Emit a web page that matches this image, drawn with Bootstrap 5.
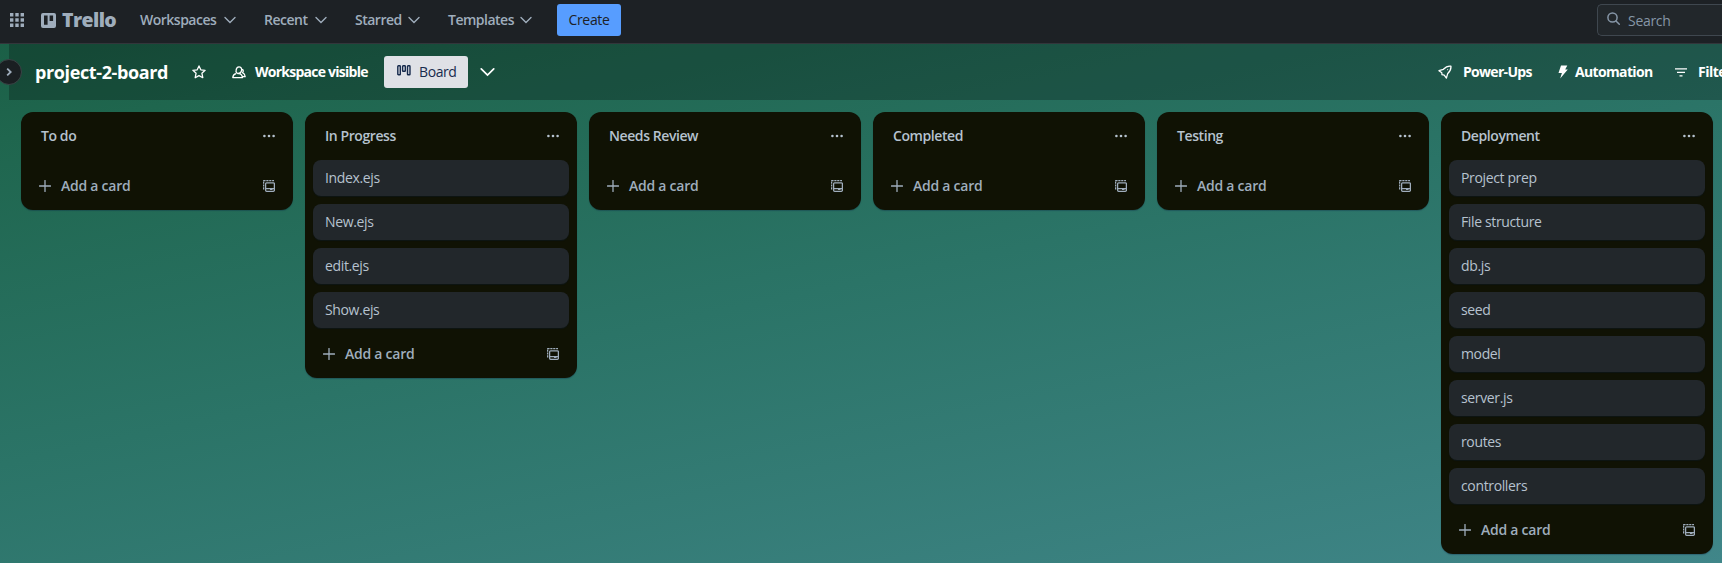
<!DOCTYPE html>
<html lang="en" data-bs-theme="dark">
<head>
<meta charset="utf-8">
<title>project-2-board | Trello</title>
<link href="https://cdn.jsdelivr.net/npm/bootstrap@5.3.0/dist/css/bootstrap.min.css" rel="stylesheet">
<style>
html,body{height:100%}
body{font-family:"Open Sans","Noto Sans",sans-serif;font-size:14px;line-height:20px;color:#b6c2cf;overflow:hidden;white-space:nowrap;background:linear-gradient(168deg,#195c43 0%,#1f664e 15%,#2b7467 50%,#408689 100%)}
svg{display:block;flex:none}
.topbar{height:44px;background:#1d2125;border-bottom:1px solid #32363b;color:#9fadbc;padding:0 0 3px 10px;overflow:hidden}
.wordmark{width:84px;gap:6px;margin-left:17px}
.word{font-size:19.5px;font-weight:800;line-height:20px;letter-spacing:-.6px}
.menu{font-weight:600;letter-spacing:-.5px;margin-right:28px}
.m-workspaces{width:96px;margin-left:-1px}
.m-recent{width:63px}
.m-starred{width:65px}
.m-templates{width:84px;margin-right:25px}
.create{width:64px;height:32px;background:#579dff;color:#1d2125;border-radius:3px;letter-spacing:-.3px}
.search{width:125px;height:32px;border:1px solid #3f474f;border-right:0;border-radius:5px 0 0 5px;background:#22272b;color:#8696a7;padding:1px 0 0 9px;gap:8px;letter-spacing:-.3px}
.boardbar{height:56px;margin-left:9px;background:rgba(0,0,0,.24);color:#fff;position:relative;padding-left:26px}
.toggle{position:absolute;left:-13px;top:15px;width:26px;height:26px;border-radius:50%;background:#1a1f22;border:1px solid #3a4446;color:#9fadbc}
.title{font-size:18px;font-weight:700;letter-spacing:-.38px;width:157px}
.people{margin-left:26px}
.strong{font-weight:700;letter-spacing:-.5px}
.visibility{margin-left:9px;width:129px;letter-spacing:-.75px}
.view{width:84px;height:32px;background:#dfe1e6;color:#172b4d;border-radius:3px;padding-left:13px;gap:8px;letter-spacing:-.4px}
.tools{width:284px}
.tools span{flex:none}
.t-power{margin-left:11px;width:95px;letter-spacing:-.7px}
.t-auto{margin-left:7px;width:100px;letter-spacing:-.9px}
.t-auto{letter-spacing:-.65px}
.t-filter{margin-left:11px}
.lists{padding:12px 0 0 21px;gap:12px}
.lane{width:272px;background:#101204;border-radius:12px;box-shadow:0 1px 1px rgba(9,30,66,.3)}
.lanehead{height:48px;padding:0 18px 0 20px;font-weight:600;letter-spacing:-.42px}
.stack{padding:0 8px;gap:8px}
.tile{height:36px;padding:8px 12px;background:#22272b;border-radius:8px;box-shadow:0 1px 1px #091e4240;letter-spacing:-.36px}
.add{height:50px;padding:2px 18px 0 18px;color:#9fadbc;font-weight:600;letter-spacing:-.25px}
.add span{margin-left:10px}
</style>
</head>
<body class="d-flex flex-column">
<svg class="d-none">
<symbol id="chev" viewBox="0 0 12 8"><path d="M1 1.500 6 6.500 11 1.500" fill="none" stroke="currentColor" stroke-width="1.400" stroke-linecap="round"/></symbol>
<symbol id="dots" viewBox="0 0 12 4"><g fill="currentColor"><circle cx="1.400" cy="2" r="1.300"/><circle cx="6" cy="2" r="1.300"/><circle cx="10.600" cy="2" r="1.300"/></g></symbol>
<symbol id="plus" viewBox="0 0 12 12"><path d="M6 .5v11M.5 6h11" stroke="currentColor" stroke-width="1.300" stroke-linecap="round"/></symbol>
<symbol id="tpl" viewBox="0 0 12 12"><g fill="none" stroke="currentColor" stroke-width="1.300"><path d="M.6 9.500V.6H11" stroke-dasharray="2.200 .7"/><rect x="2.600" y="2.800" width="8.800" height="8.500" rx="1"/></g><path d="M3 7.900h8.300v1.300H3zM7 9h2.500v1.100H7z" fill="currentColor"/></symbol>
</svg>
<nav class="topbar d-flex align-items-center flex-shrink-0">
<svg width="14" height="14" viewBox="0 0 14 14" fill="currentColor"><path d="M0 0h3.400v3.400H0zM5.300 0h3.400v3.400H5.300zM10.600 0H14v3.400h-3.400zM0 5.300h3.400v3.400H0zM5.300 5.300h3.400v3.400H5.300zM10.600 5.300H14v3.400h-3.400zM0 10.600h3.400V14H0zM5.300 10.600h3.400V14H5.300zM10.600 10.600H14V14h-3.400z"/></svg>
<a class="wordmark d-flex align-items-center text-reset text-decoration-none me-3"><svg width="15" height="15" viewBox="0 0 15 15"><path fill="currentColor" fill-rule="evenodd" d="M2 0h11a2 2 0 0 1 2 2v11a2 2 0 0 1-2 2H2a2 2 0 0 1-2-2V2a2 2 0 0 1 2-2zM3 2.500v9.200h3.600V2.500zM8.600 2.500v5.600h3.500V2.500z"/></svg><span class="word">Trello</span></a>
<div class="menu m-workspaces d-flex align-items-center justify-content-between">Workspaces<svg width="12" height="8"><use href="#chev"/></svg></div>
<div class="menu m-recent d-flex align-items-center justify-content-between">Recent<svg width="12" height="8"><use href="#chev"/></svg></div>
<div class="menu m-starred d-flex align-items-center justify-content-between">Starred<svg width="12" height="8"><use href="#chev"/></svg></div>
<div class="menu m-templates d-flex align-items-center justify-content-between">Templates<svg width="12" height="8"><use href="#chev"/></svg></div>
<div class="create d-flex align-items-center justify-content-center">Create</div>
<div class="search d-flex align-items-center ms-auto"><svg width="13" height="13" viewBox="0 0 13 13" fill="none" stroke="currentColor" stroke-width="1.500" stroke-linecap="round" class="mb-1"><circle cx="5.500" cy="5.500" r="4.600"/><path d="m9 9 3.300 3.300"/></svg>Search</div>
</nav>
<header class="boardbar d-flex align-items-center flex-shrink-0">
<span class="toggle d-flex align-items-center justify-content-center"><svg width="6" height="8" viewBox="0 0 6 8" fill="none" stroke="currentColor" stroke-width="1.800"><path d="m1.200.6 3.500 3.400-3.500 3.400"/></svg></span>
<span class="title">project-2-board</span>
<svg width="14" height="14" viewBox="0 0 14 14" fill="none" stroke="currentColor" stroke-width="1.300" stroke-linejoin="round"><path d="m7 .9 1.800 3.900 4.300.5-3.200 2.900.9 4.500L7 10.600l-3.800 2.100.9-4.500L.9 5.300l4.300-.5z"/></svg>
<svg class="people" width="14" height="13" viewBox="0 0 14 13" fill="none" stroke="currentColor" stroke-width="1.300" stroke-linejoin="round"><path d="M6.700 7.600c3 0 3.500 1.600 3.800 4H.8c.1-2.600 1-3.500 3.300-4M5.700 7.500c-1.500-.5-1.900-1.800-1.600-3.300C4.400 2 5.500.9 7 .9s3 1.100 2.600 3.300c-.3 2-1.500 3.400-3.900 3.300zM9.600 3c1.800.4 2.200 2.400.9 3.700 1.600.6 2.500 1.800 2.700 4h-2.600"/></svg>
<span class="strong visibility">Workspace visible</span>
<span class="view d-flex align-items-center"><svg width="14" height="11" viewBox="0 0 14 11" fill="none" stroke="currentColor" stroke-width="1.400" class="mb-1"><rect x=".8" y=".8" width="2.500" height="9" rx=".6"/><rect x="5.600" y=".8" width="2.700" height="5.500" rx=".6"/><rect x="10.500" y=".8" width="2.500" height="9" rx=".6"/></svg>Board</span>
<svg width="15" height="10" viewBox="0 0 12 8" class="ms-2 me-auto" style="padding-left:0;transform:translateX(4px)"><use href="#chev"/></svg>
<div class="tools strong d-flex align-items-center">
<svg width="14" height="14" viewBox="0 0 14 14" fill="none" stroke="currentColor" stroke-width="1.300" stroke-linejoin="round"><path d="M12.900 1.100C9.500.7 7.500 2 5.400 4.300L1 5.700l2.800 2 .2 2 2.200.5 2.200 2.900L9.600 8.800c2.500-2.300 3.700-4.500 3.300-7.700z"/><path d="M9.300 4.700h.8"/></svg>
<span class="t-power">Power-Ups</span>
<svg width="10" height="14" viewBox="0 0 10 14" fill="currentColor"><path d="M3 .5h6.300L7.200 4.600h2.600L2.200 13.500 3.900 8H.5z"/></svg>
<span class="t-auto">Automation</span>
<svg width="12" height="9" viewBox="0 0 12 9" stroke="currentColor" stroke-width="1.300"><path d="M0 .8h12M2 4.300h8M4.500 7.900h3"/></svg>
<span class="t-filter">Filters</span>
</div>
</header>
<main class="lists d-flex align-items-start" id="lists"></main>
<script src="https://cdn.jsdelivr.net/npm/bootstrap@5.3.0/dist/js/bootstrap.bundle.min.js"></script>
<script>
const use=(id,w,h)=>`<svg width="${w}" height="${h}"><use href="#${id}"/></svg>`;
const data=[["To do",[]],["In Progress",["Index.ejs","New.ejs","edit.ejs","Show.ejs"]],["Needs Review",[]],["Completed",[]],["Testing",[]],["Deployment",["Project prep","File structure","db.js","seed","model","server.js","routes","controllers"]]];
document.getElementById("lists").innerHTML=data.map(([t,c])=>`<section class="lane flex-shrink-0"><div class="lanehead d-flex align-items-center justify-content-between"><span>${t}</span>${use("dots",12,4)}</div><div class="stack d-flex flex-column">${c.map(x=>`<div class="tile">${x}</div>`).join("")}</div><div class="add d-flex align-items-center">${use("plus",12,12)}<span class="me-auto">Add a card</span>${use("tpl",12,12)}</div></section>`).join("");
</script>
</body>
</html>
